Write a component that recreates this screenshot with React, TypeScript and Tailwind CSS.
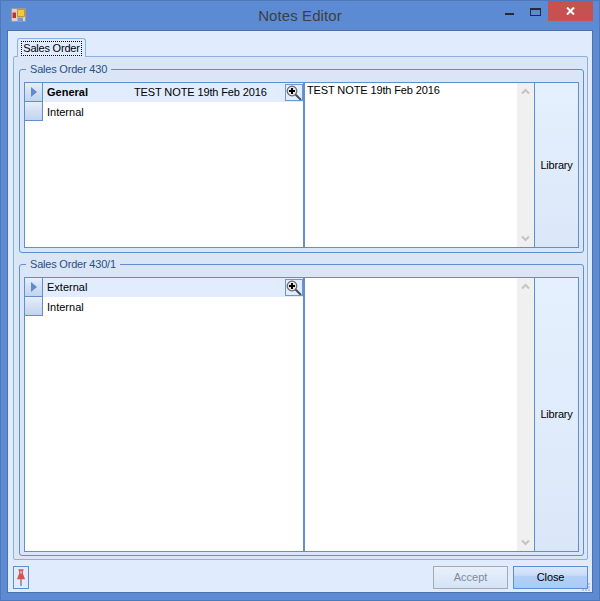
const font = { fontFamily: '"Liberation Sans", Arial, sans-serif' };

function Magnifier() {
  return (
    <div className="w-[18px] h-[17px] shrink-0 border border-[#6f97cf] flex items-center justify-center">
      <svg width="16" height="15" viewBox="0 0 16 15">
        <line x1="9" y1="9" x2="15" y2="15" stroke="#4a4a4a" strokeWidth="2" />
        <circle cx="6" cy="6" r="4.8" fill="#e4e4e4" stroke="#666" strokeWidth="1.2" />
        <path d="M3 6h6M6 3v6" stroke="#000" strokeWidth="2" />
      </svg>
    </div>
  );
}

function RowHeader({ current }: { current?: boolean }) {
  return (
    <div className="w-[18px] h-full shrink-0 border-r border-b border-[#5f8fd0] bg-gradient-to-b from-[#e6effb] via-[#d3e0f2] to-[#c3d4ec] flex items-center justify-center">
      {current && (
        <svg width="6" height="10" viewBox="0 0 6 10">
          <path d="M0 0l6 5-6 5z" fill="#5f8ad0" />
        </svg>
      )}
    </div>
  );
}

function ScrollBar() {
  return (
    <div className="w-[17px] shrink-0 bg-[#f0f0f0] flex flex-col items-center justify-between py-[5px]">
      <svg width="9" height="7" viewBox="0 0 9 7">
        <path d="M1 5.5l3.5-3.5 3.5 3.5" fill="none" stroke="#c4c4c4" strokeWidth="2" />
      </svg>
      <svg width="9" height="7" viewBox="0 0 9 7">
        <path d="M1 1.5l3.5 3.5 3.5-3.5" fill="none" stroke="#c4c4c4" strokeWidth="2" />
      </svg>
    </div>
  );
}

function Group({
  title,
  first,
  date,
  bold,
  note,
  size,
}: {
  title: string;
  first: string;
  date?: string;
  bold?: boolean;
  note?: string;
  size: string;
}) {
  return (
    <div className={`${size} shrink-0 relative border border-[#5f8fd0] rounded-[3px] px-[4px] pt-[12px] flex flex-col`}>
      <div className="absolute left-[6px] top-[-8px] px-[4px] bg-[#dae6f5] text-[11px] leading-[14px] text-[#2a4f86] whitespace-nowrap tracking-[-0.2px]">
        {title}
      </div>
      <div className="flex-1 min-h-0 flex border border-[#5f8fd0] bg-white">
        <div className="w-[278px] shrink-0 flex flex-col bg-white">
          <div className="flex h-[19px] bg-[#e1edfd]">
            <RowHeader current />
            <div className="flex-1 min-w-0 flex items-center pl-[4px] text-[11px] text-black">
              <span className={`w-[87px] shrink-0 ${bold ? 'font-bold' : ''}`}>{first}</span>
              <span className="flex-1 min-w-0 whitespace-nowrap tracking-[-0.12px]">{date}</span>
              <Magnifier />
            </div>
          </div>
          <div className="flex h-[19px]">
            <RowHeader />
            <div className="pl-[4px] text-[11px] leading-[20px] text-black">Internal</div>
          </div>
        </div>
        <div className="w-[2px] shrink-0 bg-[#5f8fd0]" />
        <div className="flex-1 min-w-0 pl-[2px] text-[11px] leading-[14px] text-black whitespace-nowrap tracking-[-0.12px]">
          {note}
        </div>
        <ScrollBar />
        <div className="w-px shrink-0 bg-[#5f8fd0]" />
        <div className="w-[43px] shrink-0 bg-gradient-to-b from-[#e5f0fe] to-[#dbe7f8] flex items-center justify-center text-[11px] text-black tracking-[-0.2px]">
          Library
        </div>
      </div>
    </div>
  );
}

export default function App() {
  return (
    <div
      style={font}
      className="relative w-[600px] h-[601px] bg-[#5d8bd3] shadow-[inset_0_0_0_1px_#4f78b8] flex flex-col px-[7px] pb-[8px] overflow-hidden"
    >
      <div className="h-[30px] shrink-0 -mx-[7px] pr-[7px] pl-[11px] flex items-start">
        <div className="flex-1 pt-[8px]">
          <svg width="15" height="14" viewBox="0 0 15 14">
            <rect x="0.5" y="0.5" width="14" height="13" fill="#d4d4d4" stroke="#9a9a9a" />
            <rect x="6.5" y="1.5" width="7" height="7" fill="#f5c73c" stroke="#b98a1a" strokeWidth="0.8" />
            <rect x="1.5" y="4.5" width="3.5" height="5.5" fill="#c8302c" />
            <rect x="6.5" y="9.5" width="5.5" height="3.5" fill="#6f9be0" />
          </svg>
        </div>
        <div className="text-[15px] leading-[20px] pt-[6px] pr-[4px] text-[#3a3f48] tracking-[0.1px]">Notes Editor</div>
        <div className="flex-1 flex justify-end items-start">
          <div className="w-[26px] h-[21px] flex items-start justify-center pt-[13px]">
            <div className="w-[9px] h-[2px] bg-[#222a33]" />
          </div>
          <div className="w-[26px] h-[21px] flex items-start justify-center pt-[8px]">
            <div className="w-[11px] h-[8px] border border-t-2 border-[#222a33]" />
          </div>
          <div className="w-[45px] h-[20px] mt-px bg-[#c75050] flex items-center justify-center">
            <svg width="9" height="8" viewBox="0 0 9 8">
              <path d="M1 0.5l7 7M8 0.5l-7 7" stroke="#fff" strokeWidth="2" />
            </svg>
          </div>
        </div>
      </div>
      <div className="flex-1 min-h-0 bg-[#e0ecfd] border border-[#4a72ae] flex flex-col pl-[5px] pr-[4px] pt-[7px]">
        <div className="h-[19px] shrink-0 pl-[4px] flex items-end relative z-10 mb-[-1px]">
          <div className="w-[69px] h-[19px] bg-[#e0ecfd] border border-b-0 border-[#8db0e2] rounded-t-[3px] flex items-center justify-center text-[11px] text-black">
            <span className="border border-dotted border-black px-[1px] leading-[13px] whitespace-nowrap tracking-[-0.2px]">Sales Order</span>
          </div>
        </div>
        <div className="h-[504px] shrink-0 bg-[#dae6f5] border border-[#8db0e2] rounded-[2px] pl-[5px] pr-[3px] pt-[12px] flex flex-col gap-[11px]">
          <Group
            title="Sales Order 430"
            first="General"
            bold
            date="TEST NOTE 19th Feb 2016"
            note="TEST NOTE 19th Feb 2016"
            size="h-[184px] pb-[4px]"
          />
          <Group title="Sales Order 430/1" first="External" size="h-[292px] pb-[3px]" />
        </div>
        <div className="flex-1 min-h-0 flex items-start justify-between pt-[6px]">
          <div className="w-[16px] h-[23px] border border-[#5f8fd0] flex items-center justify-center">
            <svg width="10" height="18" viewBox="0 0 10 18">
              <path d="M5 10v7" stroke="#9a9fa8" strokeWidth="2" />
              <path d="M2.5 1h5M3.8 1.5v4M6.2 1.5v4M2 9.5c1-2 1-3 1.5-4h3c.5 1 .5 2 1.5 4z" stroke="#d9534d" strokeWidth="1.4" fill="#d9534d" />
            </svg>
          </div>
          <div className="flex gap-[5px]">
            <div className="w-[75px] h-[23px] border border-[#a9a9a9] bg-gradient-to-b from-[#e8f0fc] to-[#d5e3f7] flex items-center justify-center text-[11px] text-[#7f8a99]">
              Accept
            </div>
            <div className="w-[75px] h-[23px] border border-[#5f8fd0] bg-[linear-gradient(#dbe8fb_0%,#c9dcf8_40%,#b4d0f6_42%,#a9cbf5_100%)] flex items-center justify-center text-[11px] text-black tracking-[-0.1px]">
              Close
            </div>
          </div>
        </div>
      </div>
      <svg className="absolute left-[582px] top-[583px]" width="9" height="9" viewBox="0 0 9 9">
        <path d="M6 0h2v2H6zM3 3h2v2H3zM6 3h2v2H6zM0 6h2v2H0zM3 6h2v2H3zM6 6h2v2H6z" fill="#b9c6d8" />
      </svg>
    </div>
  );
}
